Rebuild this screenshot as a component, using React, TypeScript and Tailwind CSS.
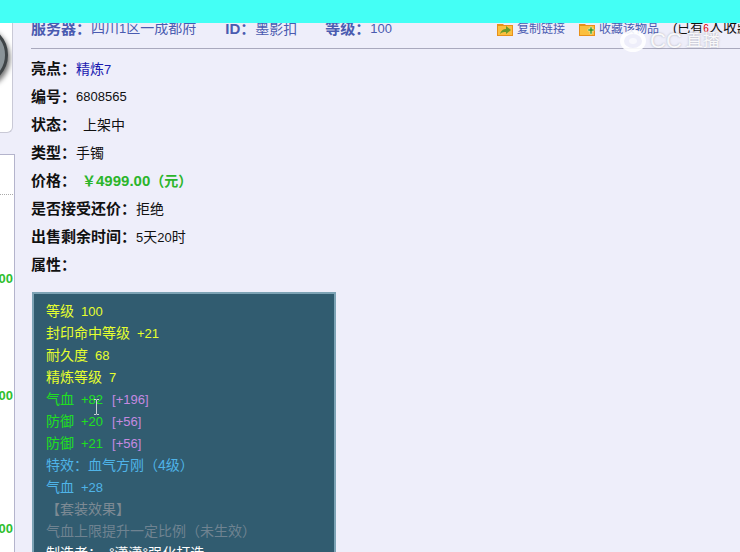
const font = { fontFamily: '"Liberation Sans", "Noto Sans CJK SC", sans-serif' };

const FolderIcon = ({ plus }: { plus?: boolean }) => (
  <svg width="16" height="13" viewBox="0 0 16 13" className="shrink-0">
    <path d="M0 1h6l1 1h9v11H0z" fill="#e8901a" />
    <path d="M1 3h14v9H1z" fill="#fbbf3e" />
    {plus ? (
      <path d="M9 6h2V4h2v2h2v2h-2v3h-2V8H9z" fill="#3f9a2a" stroke="#e8f5d0" strokeWidth="0.5" />
    ) : (
      <path d="M3 11c1-4 4-5 6-5V3l5 4-5 4V9c-2 0-4 0-6 2z" fill="#6a9a2a" />
    )}
  </svg>
);

const Num = ({ children }: { children: React.ReactNode }) => <span className="text-[13px]">{children}</span>;

const Row = ({ label, children }: { label: string; children?: React.ReactNode }) => (
  <div className="h-7 flex items-center text-[14px] text-[#111] whitespace-nowrap">
    <span className="font-bold text-[15px]">{label}：</span>
    {children}
  </div>
);

const attrLines = [
  { label: "等级", value: "100", color: "text-[#e6ff2e]" },
  { label: "封印命中等级", value: "+21", color: "text-[#e6ff2e]" },
  { label: "耐久度", value: "68", color: "text-[#e6ff2e]" },
  { label: "精炼等级", value: "7", color: "text-[#e6ff2e]" },
  { label: "气血", value: "+82", extra: "[+196]", color: "text-[#1fe01f]" },
  { label: "防御", value: "+20", extra: "[+56]", color: "text-[#1fe01f]" },
  { label: "防御", value: "+21", extra: "[+56]", color: "text-[#1fe01f]" },
  { label: "特效：血气方刚（4级）", color: "text-[#4fb4e8]" },
  { label: "气血", value: "+28", color: "text-[#4fb4e8]" },
  { label: "【套装效果】", color: "text-[#7d8a94]" },
  { label: "气血上限提升一定比例（未生效）", color: "text-[#6f8391]" },
  { label: "制造者：。°潇潇°强化打造", color: "text-white" },
];

export default function App() {
  return (
    <div style={font} className="relative w-[740px] h-[552px] overflow-hidden bg-[#eeeefa] flex flex-col">
      <div className="relative z-10 h-[23px] shrink-0 bg-[#44fff5]" />
      <div className="flex flex-1 min-h-0">
        <div className="w-[15px] shrink-0 flex flex-col">
          <div className="h-[110px] w-[13px] bg-white border-r border-b border-[#c9c9d6] rounded-br-md overflow-hidden">
            <div className="w-[60px] h-[60px] -ml-[52px] mt-[2px] rounded-full bg-[#8a9398] border-[3px] border-[#3f4447] shadow-[2px_3px_5px_rgba(0,0,0,0.55)]" />
          </div>
          <div className="h-[21px] shrink-0" />
          <div className="flex-1 bg-white border-t border-r border-[#b4b4cc] flex flex-col items-end overflow-hidden pr-px">
            <div className="h-[40px] w-full border-b border-dotted border-[#aaa] shrink-0" />
            <div className="h-[76px] shrink-0" />
            <div className="h-[117px] shrink-0 text-[13px] leading-4 font-bold text-[#2fc02f] whitespace-nowrap">00</div>
            <div className="h-[133px] shrink-0 text-[13px] leading-4 font-bold text-[#2fc02f] whitespace-nowrap">00</div>
            <div className="text-[13px] leading-4 font-bold text-[#2fc02f] whitespace-nowrap">00</div>
          </div>
        </div>
        <div className="flex-1 min-w-0 pl-4">
          <div className="h-[26px] border-b border-[#a9a9bd] flex items-end pb-[9px] text-[14px] leading-5 text-[#4a5bb0] whitespace-nowrap">
            <span className="font-bold text-[15px]">服务器：</span>
            <span>四川<Num>1</Num>区一成都府</span>
            <span className="font-bold text-[15px] ml-[29px] w-[30px]">ID：</span>
            <span>墨影扣</span>
            <span className="font-bold text-[15px] ml-[28px]">等级：</span>
            <Num>100</Num>
            <span className="ml-[105px] flex items-center gap-1 text-[12px]"><FolderIcon />复制链接</span>
            <span className="ml-[14px] flex items-center gap-1 text-[12px]"><FolderIcon plus />收藏该物品</span>
            <span className="ml-[14px] text-[#111]">
              <span className="text-[13px]">(已有</span>
              <span className="text-[#d00] text-[10px]">6</span>人收藏)
            </span>
          </div>
          <div className="mt-[6px]">
            <Row label="亮点"><span className="text-[#1a1ab0]">精炼<Num>7</Num></span></Row>
            <Row label="编号"><Num>6808565</Num></Row>
            <Row label="状态"><span className="ml-[7px]">上架中</span></Row>
            <Row label="类型">手镯</Row>
            <Row label="价格">
              <span className="ml-1.5 font-bold text-[#2bb52b]">￥<span className="text-[15px]">4999.00</span>（元）</span>
            </Row>
            <Row label="是否接受还价">拒绝</Row>
            <Row label="出售剩余时间"><span><Num>5</Num>天<Num>20</Num>时</span></Row>
            <Row label="属性" />
          </div>
          <div className="mt-[13px] ml-px w-[304px] bg-[#315c70] border-2 border-[#7da3b5] pt-1.5 pl-3 text-[14px] leading-[22px] whitespace-nowrap">
            {attrLines.map((line, idx) => (
              <div key={idx} className={`h-[22px] ${line.color}`}>
                {line.label}
                {line.value && <span className="ml-[7px] text-[13px]">{line.value}</span>}
                {line.extra && <span className="ml-[9px] text-[13px] text-[#c58ae0]">{line.extra}</span>}
              </div>
            ))}
          </div>
        </div>
      </div>

      {/* CC直播 watermark */}
      <div className="absolute z-20 left-[620px] top-[29px] flex items-center gap-1 text-white/90 [text-shadow:0_0_2px_rgba(110,110,120,0.55)]">
        <svg width="26" height="24" viewBox="0 0 26 24">
          <ellipse cx="13" cy="12" rx="11" ry="9" fill="none" stroke="#fff" strokeOpacity="0.9" strokeWidth="4" />
          <ellipse cx="13" cy="12" rx="4" ry="3" fill="#fff" fillOpacity="0.6" />
        </svg>
        <span className="text-[22px] leading-6">CC</span>
        <span className="text-[17px] leading-6">直播</span>
      </div>

      {/* text cursor */}
      <svg width="7" height="16" viewBox="0 0 7 16" className="absolute z-20 left-[93px] top-[399px]">
        <path d="M1 .5h2l.5 .5.5-.5h2M3.5 1v14M1 15.5h2l.5-.5.5 .5h2" fill="none" stroke="#c9d2d6" strokeWidth="1" />
      </svg>
    </div>
  );
}
